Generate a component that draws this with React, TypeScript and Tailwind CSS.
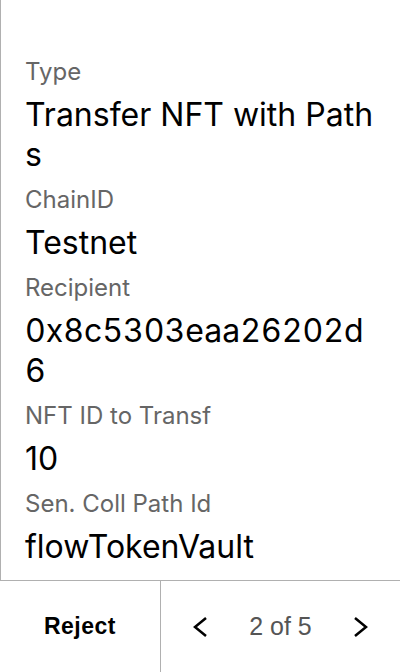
const rows = [
  { label: 'Type', value: 'Transfer NFT with Paths' },
  { label: 'ChainID', value: 'Testnet' },
  { label: 'Recipient', value: '0x8c5303eaa26202d6', mono: true },
  { label: 'NFT ID to Transf', value: '10' },
  { label: 'Sen. Coll Path Id', value: 'flowTokenVault' },
]

function Chevron({ dir }: { dir: 'left' | 'right' }) {
  return (
    <svg width="18" height="22" viewBox="0 0 18 22" fill="none" stroke="#000" strokeWidth={2.5}>
      {dir === 'left' ? <polyline points="15,2 4,11 15,20" /> : <polyline points="3,2 14,11 3,20" />}
    </svg>
  )
}

export default function App() {
  return (
    <div className="w-[400px] h-[672px] flex flex-col bg-white">
      {/* Detail list */}
      <div className="flex-1 border-l border-[#b0b0b0] pl-6 pr-6 pt-[60px] font-['Inter',sans-serif]">
        {rows.map((row, i) => (
          <div key={row.label} className={i === 0 ? '' : 'mt-[13px]'}>
            <div className="text-[24px] leading-[24px] text-[#666]">{row.label}</div>
            <div
              className={`mt-[11px] text-[32px] leading-[40px] text-black break-all ${row.mono ? 'tabular-nums' : ''}`}
            >
              {row.value}
            </div>
          </div>
        ))}
      </div>

      {/* Footer */}
      <div className="h-[92px] flex border-t border-[#b0b0b0] font-['Liberation_Sans',Arial,sans-serif]">
        <button type="button" className="w-[160px] flex items-center justify-center text-[23px] tracking-[0.5px] font-bold text-black">
          Reject
        </button>
        <div className="flex-1 flex items-center justify-between border-l border-[#b0b0b0] pl-[30px] pr-[30px]">
          <Chevron dir="left" />
          <span className="text-[25px] text-[#555]">2 of 5</span>
          <Chevron dir="right" />
        </div>
      </div>
    </div>
  )
}
